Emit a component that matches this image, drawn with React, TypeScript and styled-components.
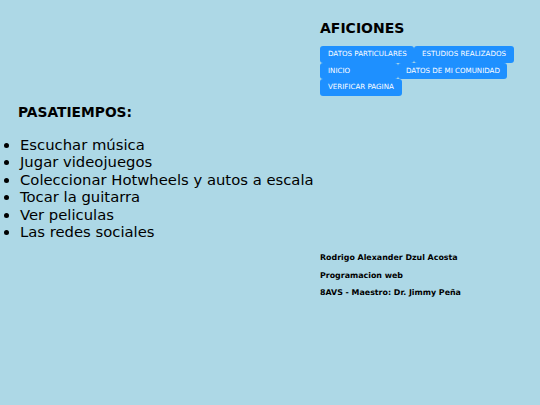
import React from "react";
import styled, { createGlobalStyle } from "styled-components";

const Global = createGlobalStyle`
  html, body { margin: 0; padding: 0; background: #add8e6; }
  body { font-family: "DejaVu Sans", Verdana, sans-serif; color: #000; }
`;

const Page = styled.div`
  display: grid;
  grid-template-columns: 320px 1fr;
  align-content: start;
  width: 540px;
  min-height: 405px;
`;

const Nav = styled.nav`
  grid-column: 2;
  padding-top: 20px;
`;

const Title = styled.h1`
  margin: 0 0 10px 0;
  font-size: 14px;
  font-weight: bold;
  line-height: 16px;
`;

const ButtonRow = styled.div`
  display: flex;
`;

const NavButton = styled.a<{ $w: number }>`
  display: block;
  box-sizing: border-box;
  width: ${(p) => p.$w}px;
  height: 16.5px;
  padding-left: 8px;
  background: #1e90ff;
  color: #fff;
  font-size: 7.1px;
  line-height: 16.5px;
  border-radius: 3px;
  white-space: nowrap;
  text-decoration: none;
`;

const Hobbies = styled.section`
  grid-column: 1 / span 2;
  padding-top: 8px;
`;

const Subtitle = styled.h2`
  margin: 0 0 16px 18px;
  font-size: 13.8px;
  font-weight: bold;
  line-height: 16px;
`;

const List = styled.ul`
  margin: 0;
  padding-left: 20px;
  font-size: 14.8px;
  line-height: 17.6px;
`;

const Footer = styled.footer`
  grid-column: 2;
  padding-top: 8px;
`;

const FooterLine = styled.p`
  margin: 0;
  font-size: 7.9px;
  font-weight: bold;
  line-height: 17.6px;
`;

const rows: [string, number][][] = [
  [["DATOS PARTICULARES", 94], ["ESTUDIOS REALIZADOS", 100]],
  [["INICIO", 78], ["DATOS DE MI COMUNIDAD", 109]],
  [["VERIFICAR PAGINA", 82]],
];

const items = [
  "Escuchar música",
  "Jugar videojuegos",
  "Coleccionar Hotwheels y autos a escala",
  "Tocar la guitarra",
  "Ver peliculas",
  "Las redes sociales",
];

export default function App() {
  return (
    <>
      <Global />
      <Page>
        <Nav>
          <Title>AFICIONES</Title>
          {rows.map((r, i) => (
            <ButtonRow key={i}>
              {r.map(([t, w]) => (
                <NavButton key={t} $w={w} href="#">
                  {t}
                </NavButton>
              ))}
            </ButtonRow>
          ))}
        </Nav>
        <Hobbies>
          <Subtitle>PASATIEMPOS:</Subtitle>
          <List>
            {items.map((t) => (
              <li key={t}>{t}</li>
            ))}
          </List>
        </Hobbies>
        <Footer>
          <FooterLine>Rodrigo Alexander Dzul Acosta</FooterLine>
          <FooterLine>Programacion web</FooterLine>
          <FooterLine>8AVS - Maestro: Dr. Jimmy Peña</FooterLine>
        </Footer>
      </Page>
    </>
  );
}
